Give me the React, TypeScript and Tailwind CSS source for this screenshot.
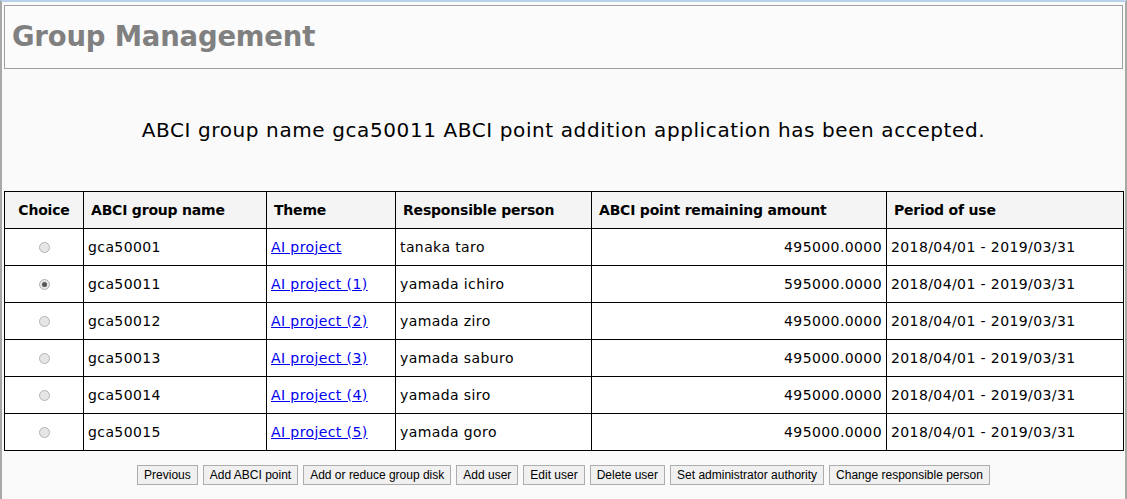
import React from "react";

type Group = {
  name: string;
  theme: string;
  person: string;
  points: string;
  period: string;
  selected?: boolean;
};

const GROUPS: Group[] = [
  { name: "gca50001", theme: "AI project", person: "tanaka taro", points: "495000.0000", period: "2018/04/01 - 2019/03/31" },
  { name: "gca50011", theme: "AI project (1)", person: "yamada ichiro", points: "595000.0000", period: "2018/04/01 - 2019/03/31", selected: true },
  { name: "gca50012", theme: "AI project (2)", person: "yamada ziro", points: "495000.0000", period: "2018/04/01 - 2019/03/31" },
  { name: "gca50013", theme: "AI project (3)", person: "yamada saburo", points: "495000.0000", period: "2018/04/01 - 2019/03/31" },
  { name: "gca50014", theme: "AI project (4)", person: "yamada siro", points: "495000.0000", period: "2018/04/01 - 2019/03/31" },
  { name: "gca50015", theme: "AI project (5)", person: "yamada goro", points: "495000.0000", period: "2018/04/01 - 2019/03/31" },
];

const BUTTONS = [
  "Previous",
  "Add ABCI point",
  "Add or reduce group disk",
  "Add user",
  "Edit user",
  "Delete user",
  "Set administrator authority",
  "Change responsible person",
];

function Radio({ checked }: { checked?: boolean }) {
  return (
    <span className="inline-flex h-[11px] w-[11px] items-center justify-center rounded-full border border-[#b4b4b4] bg-[#e6e6e6] align-middle">
      {checked && <span className="h-[5px] w-[5px] rounded-full bg-[#555]" />}
    </span>
  );
}

export default function App() {
  return (
    <div
      className="h-[499px] w-[1127px] overflow-hidden border-x-2 border-t-2 border-x-[#a8a8a8] border-t-[#b9d1ea] bg-[#fafafa] text-black"
      style={{ fontFamily: '"DejaVu Sans", Verdana, sans-serif' }}
    >
      <div className="px-[2px] pt-[3px]">
        <div className="flex h-[64px] items-center border border-[#a0a0a0] bg-[#fbfbfb] pl-[7px]">
          <h1 className="text-[27.5px] font-bold tracking-[-0.2px] text-[#808080]">Group Management</h1>
        </div>

        <p className="pt-[46px] pb-[46px] text-center text-[20px] leading-[30px] tracking-[0.6px]">
          ABCI group name gca50011 ABCI point addition application has been accepted.
        </p>

        <table className="w-[1119px] table-fixed border-collapse text-[14px] tracking-[0.4px]">
          <colgroup>
            <col className="w-[79px]" />
            <col className="w-[183px]" />
            <col className="w-[129px]" />
            <col className="w-[196px]" />
            <col className="w-[295px]" />
            <col className="w-[237px]" />
          </colgroup>
          <thead className="tracking-[-0.2px]">
            <tr className="h-[37px] bg-[#f4f4f4]">
              <th className="border border-black text-center font-bold">Choice</th>
              <th className="border border-black pl-[7px] text-left font-bold">ABCI group name</th>
              <th className="border border-black pl-[7px] text-left font-bold">Theme</th>
              <th className="border border-black pl-[7px] text-left font-bold">Responsible person</th>
              <th className="border border-black pl-[7px] text-left font-bold">ABCI point remaining amount</th>
              <th className="border border-black pl-[7px] text-left font-bold">Period of use</th>
            </tr>
          </thead>
          <tbody>
            {GROUPS.map((g) => (
              <tr key={g.name} className="h-[37px] bg-white">
                <td className="border border-black text-center">
                  <Radio checked={g.selected} />
                </td>
                <td className="border border-black pl-[4px]">{g.name}</td>
                <td className="border border-black pl-[4px]">
                  <a href="#" className="text-[#0000ee] underline">
                    {g.theme}
                  </a>
                </td>
                <td className="border border-black pl-[4px]">{g.person}</td>
                <td className="border border-black pr-[4px] text-right">{g.points}</td>
                <td className="border border-black pl-[4px]">{g.period}</td>
              </tr>
            ))}
          </tbody>
        </table>

        <div
          className="flex justify-center gap-[5px] pt-[14px]"
          style={{ fontFamily: '"Liberation Sans", Arial, sans-serif' }}
        >
          {BUTTONS.map((b) => (
            <button
              key={b}
              className="h-[20px] border border-[#adadad] bg-[#f0f0f0] px-[6px] text-[12px] leading-none text-black"
            >
              {b}
            </button>
          ))}
        </div>
      </div>
    </div>
  );
}
